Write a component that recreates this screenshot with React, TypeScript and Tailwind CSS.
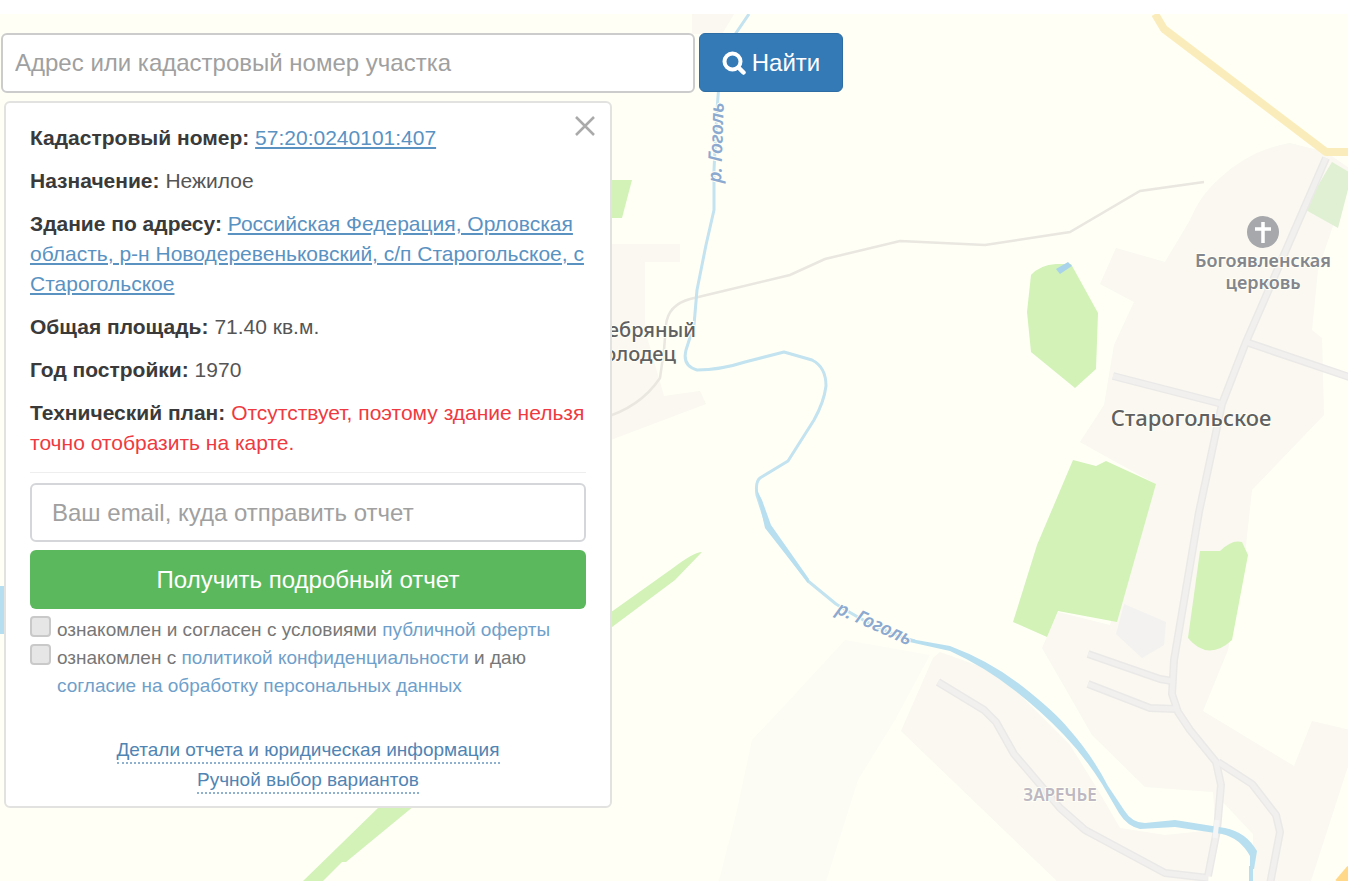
import type { ReactNode } from "react";

const casing = "#ebe9e8";
const roadFill = "#f2f0ef";

const localRoads = [
  "M1326 158L1246 342L1222 404L1199 512L1174 660L1172 694L1178 712L1190 730L1216 762L1221 785L1217 830L1208 876",
  "M1113 376L1222 404",
  "M1246 342L1296 359L1352 378",
  "M1088 654L1160 679L1172 681",
  "M1088 684L1150 708L1176 709",
  "M1218 762L1252 784L1276 815L1280 832L1270 884",
  "M938 682L984 710L996 722L1014 754L1060 808L1085 830L1165 873L1208 878",
];

function VillageMap() {
  return (
    <svg
      className="absolute inset-x-0 bottom-0 top-[14px] h-[calc(100%-14px)] w-full bg-[#fffff6]"
      viewBox="0 14 1348 867"
      preserveAspectRatio="xMinYMin slice"
      role="img"
      aria-label="Карта: Старогольское"
    >
      <g fill="#faf8f0">
        <path d="M600 244H680V262H645V330L664 396L700 391L706 404L600 444Z" />
        <path d="M692 14H734L722 34H692Z" />
        <path d="M845 640L930 655L895 720L858 780L825 885H718L737 810L752 740L785 705Z" fill="#fcfcf4" />
        <path d="M1326 152L1290 143Q1250 150 1220 178Q1200 195 1190 220L1165 262L1116 248L1100 284L1134 302L1114 345L1104 405L1080 442L1105 456L1156 484L1110 625L1058 612L1042 648L1072 700L1092 735L1145 787L1213 792L1215 830L1165 835L1120 828L1098 790L1070 745L1020 695L990 670L940 652L933 658L901 731L1060 884H1310L1350 760V730L1312 721L1294 766L1203 711L1228 650L1246 545L1252 490L1324 415L1322 338L1312 330L1318 270L1352 170Z" />
        <path d="M1221 800L1253 834V884H1208Z" fill="#fffff6" />
        <path d="M1128 792L1213 792L1215 826L1180 821L1140 822Z" fill="#fffff6" />
      </g>
      <path d="M1124 604L1166 622L1164 645L1142 658L1116 634Z" fill="#f3f2f0" />

      <g fill="#d2f2b8">
        <path d="M606 180H632L622 218H606Z" />
        <path d="M1031 275Q1040 265 1056 264L1071 264L1098 313L1096 369L1075 388L1031 352L1027 312Z" />
        <path d="M1073 460L1096 466L1106 461L1156 484L1117 622L1058 611L1047 637L1013 622L1037 545Z" />
        <path d="M1200 551H1220Q1232 539 1242 542L1248 555L1232 640Q1208 662 1188 638Z" />
        <path d="M702 552Q694 552 673 568L600 620V636L675 580Z" />
        <path d="M380 806H414L346 862L342 862L320 884H300Z" />
      </g>
      <path d="M1332 162L1352 174L1338 228L1304 209Z" fill="#dff0d3" />
      <path d="M1056 269L1068 262L1072 266L1060 274Z" fill="#a9d3ea" />
      <path d="M0 586H8V634H0Z" fill="#b5def0" />

      <g fill="none" stroke="#e9e7e0" strokeWidth="2.5">
        <path d="M600 419Q640 408 660 378L664 350L666 325Q668 305 690 299L790 275L825 259L900 241L985 245L1070 232L1140 191L1204 182" />
      </g>

      <g fill="none" stroke={casing} strokeWidth="8" strokeLinejoin="round">
        {localRoads.map((d) => (
          <path key={d} d={d} />
        ))}
      </g>
      <g fill="none" stroke={roadFill} strokeWidth="5" strokeLinejoin="round">
        {localRoads.map((d) => (
          <path key={d} d={d} />
        ))}
      </g>

      <path
        d="M749 14L734 36L720 70L717 110L714 170L714 210L706 245L697 290L694 325L686 350Q682 366 697 370Q720 370 745 362L784 352L812 360Q826 367 826 386Q824 402 814 420L788 461L760 478Q755 482 757 495L767 526L808 581L836 604Q880 632 915 641"
        fill="none"
        stroke="#c2e3ef"
        strokeWidth="3"
        strokeLinejoin="round"
      />
      <path
        d="M756 488L762 500L771 525L809 579L808 583L765 528Z"
        fill="#b8dfef"
      />
      <path
        d="M905 638L950 646Q990 661 1022 686Q1055 712 1068 728Q1092 755 1108 786L1124 810Q1132 823 1145 823L1175 820L1225 828Q1246 832 1257 851L1254 869L1250 869L1250 856Q1240 838 1222 834L1175 827L1140 829Q1127 826 1119 813L1102 784Q1085 757 1064 735Q1040 710 1014 690Q985 667 950 651L905 641Z"
        fill="#b8dfef"
      />
      <path d="M1251 866V884" stroke="#b8dfef" strokeWidth="4" />
      <path d="M1217 820L1215 838" stroke="#f4f5f4" strokeWidth="5" />

      <path d="M1155 14L1164 29L1326 152H1352" fill="none" stroke="#fbedbb" strokeWidth="8" strokeLinejoin="round" />
      <path d="M1352 870L1340 884" stroke="#ffd88a" strokeWidth="12" />

      <g fontFamily='"Noto Sans", sans-serif' stroke="#fffff6" strokeWidth="2" paintOrder="stroke">
        <g fontSize="20" fill="#606060" fontWeight="500">
          <text x="696" y="337" textAnchor="end">Серебряный</text>
          <text x="676" y="361" textAnchor="end">Колодец</text>
        </g>
        <text x="1191" y="426" fontSize="22" fill="#606060" fontWeight="500" textAnchor="middle">
          Старогольское
        </text>
        <g fontSize="18" fill="#83868c" fontWeight="600" textAnchor="middle">
          <text x="1263" y="267">Богоявленская</text>
          <text x="1263" y="289">церковь</text>
        </g>
        <text x="1060" y="801" fontSize="17" fill="#bdb8c2" fontWeight="600" textAnchor="middle">
          ЗАРЕЧЬЕ
        </text>
        <g fontSize="19" fill="#8ca9d0" fontWeight="600" fontStyle="italic">
          <text transform="translate(721 183) rotate(-88)">р. Гоголь</text>
          <text transform="translate(835 613) rotate(24)">р. Гоголь</text>
        </g>
      </g>

      <circle cx="1263" cy="232" r="16" fill="#a6a8ab" />
      <path d="M1263 222V243M1255 229H1271" stroke="#fff" strokeWidth="3.5" />
    </svg>
  );
}

function SearchIcon() {
  return (
    <svg className="size-6" viewBox="0 0 24 24" fill="none" stroke="currentColor" aria-hidden="true">
      <circle cx="10.5" cy="10.5" r="8" strokeWidth="4" />
      <path d="M16.5 16.5L21.5 21.5" strokeWidth="4.5" strokeLinecap="round" />
    </svg>
  );
}

function Field({ label, children }: { label: string; children: ReactNode }) {
  return (
    <div>
      <dt className="inline font-bold text-[#3a3a3a]">{label}:</dt> <dd className="inline">{children}</dd>
    </div>
  );
}

function Consent({ id, children }: { id: string; children: ReactNode }) {
  return (
    <div className="flex items-start gap-1.5">
      <input
        id={id}
        type="checkbox"
        className="size-[21px] shrink-0 appearance-none rounded border-2 border-[#c9c9c9] bg-[#e6e6e6] checked:bg-[#337ab7]"
      />
      <label htmlFor={id}>{children}</label>
    </div>
  );
}

export default function App() {
  return (
    <main className='relative flex min-h-screen flex-col overflow-hidden bg-white font-["Liberation_Sans",Arial,sans-serif] text-[#555]'>
      <VillageMap />

      <form className="relative flex gap-1 px-px pt-[33px]" onSubmit={(e) => e.preventDefault()}>
        <input
          type="search"
          aria-label="Адрес или кадастровый номер участка"
          placeholder="Адрес или кадастровый номер участка"
          className="h-[60px] w-full max-w-[694px] rounded-md border-2 border-[#ccc] bg-white px-3 text-2xl outline-none placeholder:text-[#a0a0a0]"
        />
        <button
          type="submit"
          className="flex h-[59px] w-36 shrink-0 items-center justify-center gap-1.5 rounded-md border border-[#2e6da4] bg-[#337ab7] text-2xl text-white"
        >
          <SearchIcon />
          Найти
        </button>
      </form>

      <section className="relative ml-1 mt-2 w-full max-w-[608px] rounded-md border-2 border-[#e2e2e0] bg-white px-6 pb-3 pt-5">
        <button type="button" aria-label="Закрыть" className="absolute right-[15px] top-[13px] text-[#aaa]">
          <svg className="size-5" viewBox="0 0 20 20" stroke="currentColor" strokeWidth="2.5" aria-hidden="true">
            <path d="M1 1L19 19M19 1L1 19" />
          </svg>
        </button>

        <dl className="flex flex-col gap-[13px] text-[21px] leading-[30px]">
          <Field label="Кадастровый номер">
            <a href="#parcel" className="text-[#5a92c2] underline">57:20:0240101:407</a>
          </Field>
          <Field label="Назначение">Нежилое</Field>
          <Field label="Здание по адресу">
            <a href="#address" className="text-[#5a92c2] underline">
              Российская Федерация, Орловская область, р-н Новодеревеньковский, с/п Старогольское, с Старогольское
            </a>
          </Field>
          <Field label="Общая площадь">71.40 кв.м.</Field>
          <Field label="Год постройки">1970</Field>
          <Field label="Технический план">
            <span className="text-[#ee3a40]">Отсутствует, поэтому здание нельзя точно отобразить на карте.</span>
          </Field>
        </dl>

        <hr className="mt-3.5 border-[#eee]" />

        <form className="mt-2.5" onSubmit={(e) => e.preventDefault()}>
          <input
            type="email"
            aria-label="Ваш email, куда отправить отчет"
            placeholder="Ваш email, куда отправить отчет"
            className="h-[59px] w-full rounded-md border-2 border-[#d4d6d9] bg-white px-5 text-2xl outline-none placeholder:text-[#a0a0a0]"
          />
          <button type="submit" className="mt-2 h-[59px] w-full rounded-md bg-[#5cb85c] text-2xl text-white">
            Получить подробный отчет
          </button>
          <div className="mt-[7px] flex flex-col text-[19px] leading-7 text-[#777]">
            <Consent id="offer">
              ознакомлен и согласен с условиями <a href="#offer-text" className="text-[#6f9fca]">публичной оферты</a>
            </Consent>
            <Consent id="privacy">
              ознакомлен с <a href="#privacy-text" className="text-[#6f9fca]">политикой конфиденциальности</a> и даю{" "}
              <a href="#consent-text" className="text-[#6f9fca]">согласие на обработку персональных данных</a>
            </Consent>
          </div>
        </form>

        <nav className="mt-[38px] flex flex-col items-center gap-1 text-[19px] leading-6 text-[#5084b3]">
          <a href="#details" className="border-b-2 border-dotted border-[#8fb1d0]">
            Детали отчета и юридическая информация
          </a>
          <a href="#variants" className="border-b-2 border-dotted border-[#8fb1d0]">
            Ручной выбор вариантов
          </a>
        </nav>
      </section>
    </main>
  );
}
